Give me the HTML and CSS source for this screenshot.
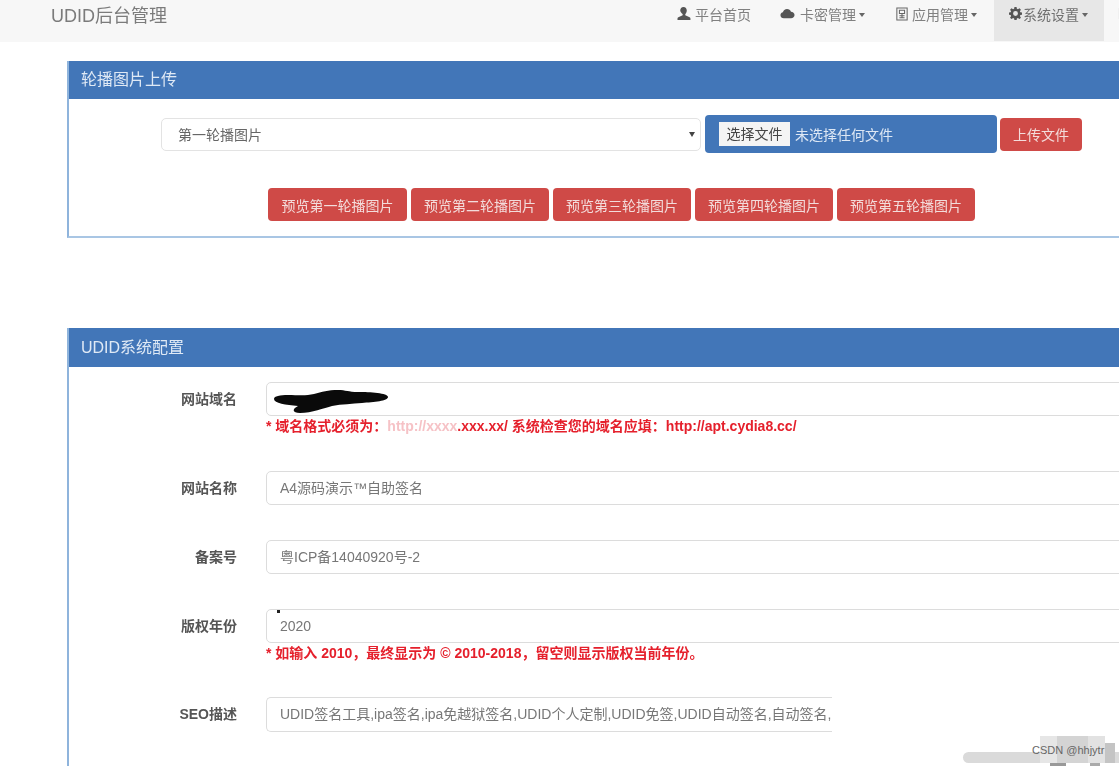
FILE: index.html
```html
<!DOCTYPE html>
<html lang="zh">
<head>
<meta charset="utf-8">
<title>UDID后台管理</title>
<link rel="stylesheet" href="styles.css">
</head>
<body>
<div class="page">
  <header class="navbar">
    <div class="brand">UDID后台管理</div>
    <nav class="nav">
      <a class="nav-item item-home">
        <svg class="icon" viewBox="0 0 16 16"><path d="M8 1c2.200 0 3.500 1.700 3.500 3.800 0 1.600-.7 3-1.600 3.800v1.200l4.600 2.200c.6.3.9.8.9 1.400V15H1.600v-1.600c0-.6.3-1.100.9-1.400l4.600-2.200V8.600C6.200 7.800 4.500 6.400 4.500 4.800 4.500 2.700 5.800 1 8 1z"/></svg>
        <span>平台首页</span>
      </a>
      <a class="nav-item item-card">
        <svg class="icon" viewBox="0 0 16 16"><path d="M4 13c-2 0-3.500-1.400-3.500-3.200 0-1.600 1.100-2.800 2.600-3.100C3.500 4.600 5.300 3.200 7.500 3.200c2 0 3.600 1.100 4.200 2.800 2.100 0 3.800 1.500 3.800 3.500S13.800 13 11.800 13z"/></svg>
        <span>卡密管理</span><i class="caret"></i>
      </a>
      <a class="nav-item item-app">
        <svg class="icon icon-app" viewBox="0 0 14 16"><path fill="none" stroke="currentColor" stroke-width="1.200" d="M1 1h12v14H1zM4 3.500h6v4H4zM4 10h6M4 12.500h6M7 7.500v5"/></svg>
        <span>应用管理</span><i class="caret"></i>
      </a>
      <a class="nav-item item-sys active">
        <svg class="icon icon-gear" viewBox="0 0 16 16"><path fill-rule="evenodd" d="M6.700 0h2.600l.4 2.200 1.300.6 1.900-1.300 1.800 1.800-1.300 1.900.6 1.300 2 .4v2.600l-2 .4-.6 1.300 1.300 1.900-1.800 1.800-1.900-1.300-1.300.6-.4 2.200H6.700l-.4-2.200-1.300-.6-1.900 1.300-1.800-1.800 1.300-1.900-.6-1.300-2-.4V6.900l2-.4.6-1.300-1.300-1.900 1.800-1.800 1.900 1.300 1.300-.6zM8 5a3 3 0 1 0 0 6 3 3 0 0 0 0-6z"/></svg>
        <span>系统设置</span><i class="caret"></i>
      </a>
      <a class="nav-item item-more">
        <svg class="icon" viewBox="0 0 16 16"><path d="M2 2h12v12H2z"/></svg>
      </a>
    </nav>
  </header>

  <section class="panel panel-upload">
    <h2 class="panel-title">轮播图片上传</h2>
    <div class="panel-body upload-body">
      <div class="upload-row">
        <div class="select"><span>第一轮播图片</span><i class="select-arrow"></i></div>
        <div class="file-box"><span class="file-btn">选择文件</span><span class="file-name">未选择任何文件</span></div>
        <button class="btn btn-upload" type="button">上传文件</button>
      </div>
      <div class="preview-row">
        <button class="btn" type="button">预览第一轮播图片</button>
        <button class="btn" type="button">预览第二轮播图片</button>
        <button class="btn" type="button">预览第三轮播图片</button>
        <button class="btn" type="button">预览第四轮播图片</button>
        <button class="btn" type="button">预览第五轮播图片</button>
      </div>
    </div>
  </section>

  <section class="panel panel-config">
    <h2 class="panel-title">UDID系统配置</h2>
    <div class="panel-body config-body">
      <div class="form-row with-hint first-row">
        <label class="form-label">网站域名</label>
        <div class="form-field">
          <div class="input">
            <svg class="scribble" viewBox="0 0 116 24"><path d="M1 9c0-3 6-4 14-4 10 0 18 1 26-1 8-2 14-4 24-4 8 0 10 2 20 2 12 0 30 1 30 5 0 4-14 5-26 6-10 1-20 1-30 3-8 2-20 7-32 7-8 0-8-4-2-7C13 15 1 13 1 9z"/></svg>
          </div>
          <p class="hint">* 域名格式必须为：<span class="smudged">http://xxxx</span>.xxx.xx/ 系统检查您的域名应填：http://apt.cydia8.cc/</p>
        </div>
      </div>
      <div class="form-row">
        <label class="form-label">网站名称</label>
        <div class="form-field"><div class="input">A4源码演示™自助签名</div></div>
      </div>
      <div class="form-row">
        <label class="form-label">备案号</label>
        <div class="form-field"><div class="input">粤ICP备14040920号-2</div></div>
      </div>
      <div class="form-row with-hint">
        <label class="form-label">版权年份</label>
        <div class="form-field">
          <div class="input input-dotted">2020</div>
          <p class="hint">* 如输入 2010，最终显示为 © 2010-2018，留空则显示版权当前年份。</p>
        </div>
      </div>
      <div class="form-row">
        <label class="form-label">SEO描述</label>
        <div class="form-field form-field-short"><div class="input input-short">UDID签名工具,ipa签名,ipa免越狱签名,UDID个人定制,UDID免签,UDID自动签名,自动签名,</div></div>
      </div>
      <div class="form-row">
        <div class="form-label"></div>
        <div class="form-field form-field-short"><div class="input input-short"></div></div>
      </div>
    </div>
  </section>

  <div class="watermark">
    <div class="wm-band"></div>
    <div class="wm-block wm-a"></div>
    <div class="wm-block wm-b"></div>
    <div class="wm-block wm-c"></div>
    <div class="wm-block wm-d"></div>
    <div class="wm-block wm-e"></div>
    <div class="wm-block wm-f"></div>
    <div class="wm-text">CSDN @hhjytr</div>
  </div>
</div>
</body>
</html>
```
FILE: styles.css
```css
* { box-sizing: border-box; }
html, body { margin: 0; padding: 0; background: #fff; }
body {
  font-family: "Liberation Sans", "Noto Sans CJK SC", sans-serif;
  font-size: 14px;
  color: #333;
  height: 766px;
  overflow: hidden;
}
.page { position: relative; width: 1119px; height: 766px; overflow: hidden; }

.navbar {
  display: flex;
  align-items: flex-start;
  height: 42px;
  padding-left: 51px;
  background: #f7f7f7;
  filter: blur(.7px);
}
.brand { font-size: 18px; line-height: 32px; color: #7b7b7b; width: 610px; flex: none; }
.nav { display: flex; flex: none; }
.nav-item {
  display: flex;
  align-items: center;
  height: 41px;
  padding: 0 15px 14px;
  color: #808080;
  font-size: 14px;
  white-space: nowrap;
}
.item-home { width: 104px; }
.item-card { width: 116px; }
.item-app { width: 113px; }
.item-sys { width: 110px; }
.item-more { width: 40px; padding-left: 13px; opacity: .35; }
.active { background: #e7e7e7; color: #707070; }
.icon { width: 15px; height: 15px; margin-right: 4px; fill: #555; color: #666; flex: none; }
.item-card .icon { margin-right: 5px; }
.icon-app { width: 12px; height: 14px; }
.icon-gear { width: 13px; height: 13px; margin-right: 1px; }
.caret {
  margin-left: 3px;
  margin-top: 2px;
  border-top: 4px solid #666;
  border-left: 3.500px solid transparent;
  border-right: 3.500px solid transparent;
}

.panel {
  width: 1100px;
  margin-left: 67px;
  background: #fff;
  border-left: 2px solid #8fb4dc;
  filter: blur(.7px);
}
.panel-upload { margin-top: 19px; border-bottom: 2px solid #a9c6e4; border-right: 2px solid #a9c6e4; }
.panel-config { margin-top: 90px; }
.panel-title {
  margin: 0;
  height: 38px;
  padding-left: 12px;
  font-size: 16px;
  font-weight: 400;
  line-height: 38px;
  color: #dfe9f5;
  background: #4276b8;
}
.panel-config .panel-title { height: 39px; line-height: 39px; }

.upload-body { padding: 16px 0 15px 92px; }
.upload-row { display: flex; align-items: center; }
.select {
  display: flex;
  align-items: center;
  justify-content: space-between;
  width: 540px;
  height: 33px;
  padding: 0 5px 0 16px;
  color: #666;
  font-size: 14px;
  border: 1px solid #e3e3e3;
  border-radius: 5px;
}
.select-arrow {
  border-top: 5px solid #444;
  border-left: 3px solid transparent;
  border-right: 3px solid transparent;
}
.file-box {
  display: flex;
  align-items: center;
  width: 292px;
  height: 38px;
  margin-left: 4px;
  padding-left: 14px;
  background: #4276b8;
  border-radius: 4px;
}
.file-btn {
  width: 71px;
  height: 24px;
  font-size: 14px;
  line-height: 24px;
  text-align: center;
  color: #444;
  background: #f4f4f4;
}
.file-name { margin-left: 5px; font-size: 14px; color: #dde7f4; }
.btn {
  width: 138px;
  height: 33px;
  padding: 0;
  font-family: inherit;
  font-size: 14px;
  color: #f3dcdb;
  background: #cf4a47;
  border: 0;
  border-radius: 4px;
}
.btn-upload { width: 82px; margin-left: 3px; }
.preview-row { display: flex; gap: 4px; margin: 35px 0 0 107px; }
.preview-row .btn:first-child { width: 139px; }

.config-body { padding-top: 15px; }
.form-row { display: flex; margin-bottom: 35px; }
.with-hint { margin-bottom: 36px; }
.first-row { margin-bottom: 37px; }
.form-label {
  flex: none;
  width: 168px;
  padding-top: 8px;
  font-size: 14px;
  font-weight: 700;
  line-height: 18px;
  text-align: right;
  color: #555;
}
.form-field { flex: none; width: 900px; margin-left: 29px; }
.form-field-short { width: 566px; }
.input {
  position: relative;
  height: 34px;
  padding: 0 13px;
  overflow: hidden;
  font-size: 14px;
  line-height: 32px;
  white-space: nowrap;
  color: #777;
  background: #fff;
  border: 1px solid #dcdcdc;
  border-radius: 5px;
}
.input-short { border-right: 0; border-radius: 5px 0 0 5px; height: 35px; }
.input-dotted::before {
  content: "";
  position: absolute;
  left: 10px;
  top: 0;
  width: 3px;
  height: 3px;
  background: #222;
}
.scribble { position: absolute; left: 6px; top: 7px; width: 116px; height: 24px; fill: #0a0a0a; }
.hint {
  margin: 0;
  height: 18px;
  font-size: 14px;
  font-weight: 700;
  line-height: 21px;
  white-space: nowrap;
  color: #e5202c;
}
.smudged { color: #f6c2c6; }

.watermark { position: absolute; left: 960px; top: 730px; width: 159px; height: 36px; }
.wm-band { position: absolute; left: 3px; top: 22px; width: 156px; height: 11px; background: #dadada; border-radius: 6px 0 0 6px; }
.wm-block { position: absolute; }
.wm-a { left: 80px; top: 6px; width: 17px; height: 27px; background: #e6e6e6; }
.wm-b { left: 97px; top: 6px; width: 31px; height: 27px; background: #d4d4d4; }
.wm-c { left: 128px; top: 6px; width: 17px; height: 27px; background: #e2e2e2; }
.wm-d { left: 145px; top: 13px; width: 10px; height: 20px; background: #c4c4c4; }
.wm-e { left: 90px; top: 33px; width: 16px; height: 3px; background: #999; }
.wm-f { left: 130px; top: 33px; width: 10px; height: 3px; background: #aaa; }
.wm-text {
  position: absolute;
  left: 72px;
  top: 13px;
  font-size: 11px;
  line-height: 14px;
  white-space: nowrap;
  color: #666;
}
```
